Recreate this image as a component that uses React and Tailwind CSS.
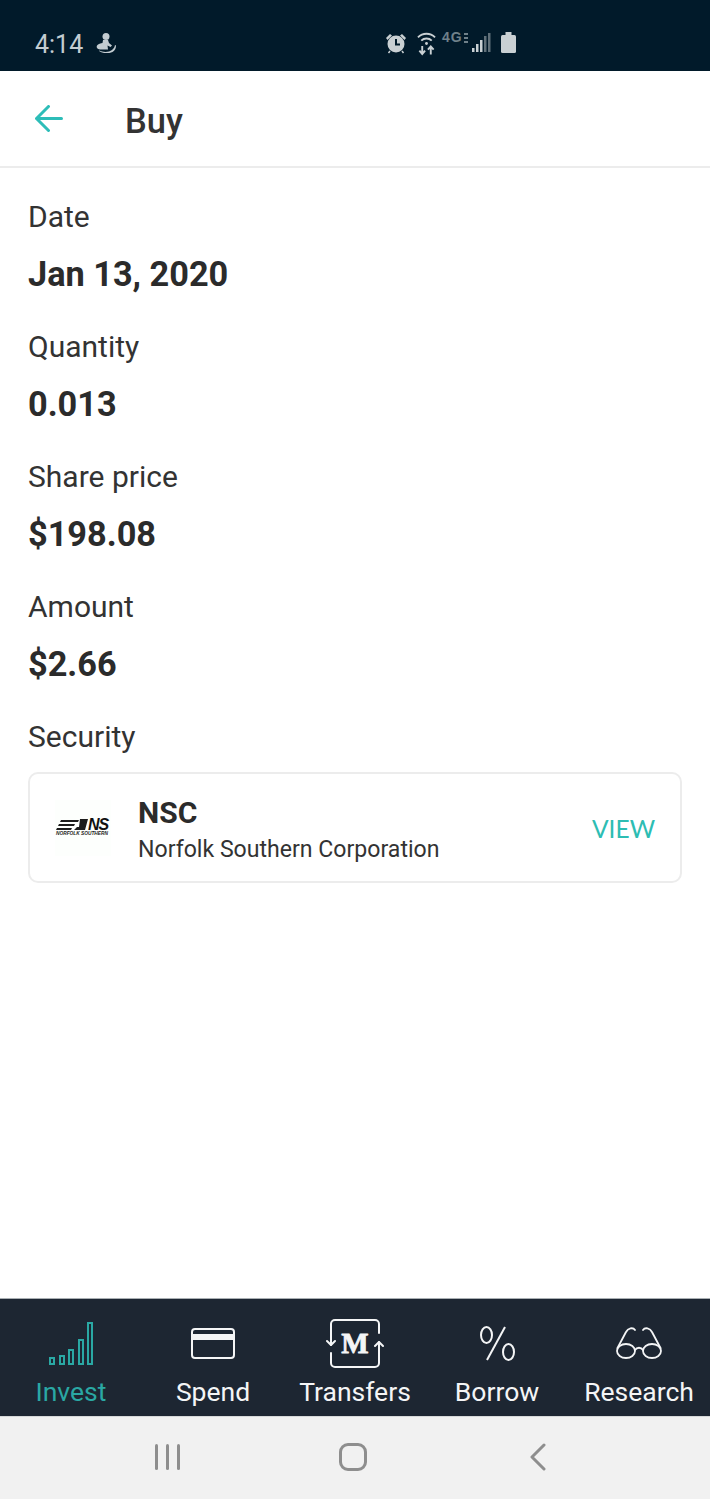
const fields = [
  { label: "Date", value: "Jan 13, 2020" },
  { label: "Quantity", value: "0.013" },
  { label: "Share price", value: "$198.08" },
  { label: "Amount", value: "$2.66" },
];

function StatusBar() {
  return (
    <div className="relative flex h-[71px] shrink-0 items-end bg-[#011a2a] pb-[11px] pl-[35px] text-[#c3ccd1]">
      <span className="text-[25px] leading-[30px]">4:14</span>
      {/* notification glyph */}
      <svg className="ml-[13px] mb-[7px]" width="20" height="20" viewBox="0 0 20 20" fill="#c3ccd1">
        <circle cx="10" cy="3.500" r="3.500" />
        <path d="M7 7h5l1 3 3 2.500-1.500 1.500-3-1.500.500 4H4C1 16 0 14 1 12.500 2 11 5 10 6.500 10z" />
        <path d="M3 17.500c4 2 10 2 13-.500 2-1.500 2.500-3 3-5l1 .500c0 3-1 5-3.500 6.500-4 2-10 1.500-13.500-1z" />
      </svg>
      {/* right side icons */}
      <div className="absolute left-[385px] top-[31px] flex items-start">
        <svg width="22" height="24" viewBox="0 0 22 24" fill="#c9d0d3">
          <circle cx="11" cy="13" r="8.500" />
          <path d="M1 7l4-4 2 1.500-4.500 4.500zM21 7l-4-4-2 1.500 4.500 4.500z" />
          <path d="M5 20l-1.500 2M17 20l1.500 2" stroke="#c9d0d3" strokeWidth="1.500" />
          <path d="M11 8v5.500h4" stroke="#011a2a" strokeWidth="2" fill="none" />
        </svg>
        <svg className="ml-[10px]" width="19" height="25" viewBox="0 0 20 25" fill="none" stroke="#c9d0d3">
          <path d="M1 6c5-5 13-5 18 0" strokeWidth="2" />
          <path d="M4.500 9.500c3-3 8-3 11 0" strokeWidth="2" />
          <circle cx="10" cy="12.500" r="1.500" fill="#c9d0d3" stroke="none" />
          <path d="M5.500 15v8M2.500 20l3 3.500 3-3.500M14.500 24v-8M11.500 19l3-3.500 3 3.500" strokeWidth="2" />
        </svg>
        <span className="ml-[6px] font-['Liberation_Sans',sans-serif] text-[14px] font-bold leading-[12px] tracking-[1px] text-[#6f8089]">4G</span>
        <div className="ml-[1px] mt-[2px] flex flex-col gap-[2px]">
          <span className="h-[2px] w-[4px] bg-[#6f8089]" />
          <span className="h-[2px] w-[4px] bg-[#6f8089]" />
          <span className="h-[2px] w-[4px] bg-[#6f8089]" />
        </div>
        <svg className="ml-[4px] mt-[2px]" width="19" height="20" viewBox="0 0 19 20">
          <rect x="0" y="15" width="2.500" height="4" fill="#c9d0d3" />
          <rect x="4" y="11" width="2.500" height="8" fill="#c9d0d3" />
          <rect x="8" y="7" width="2.500" height="12" fill="#c9d0d3" />
          <rect x="12" y="3" width="2.500" height="16" fill="#5f6f78" />
          <rect x="16" y="0" width="2.500" height="19" fill="#5f6f78" />
        </svg>
        <svg className="ml-[10px] mt-[1px]" width="15" height="21" viewBox="0 0 15 21" fill="#c9d0d3">
          <rect x="0" y="3" width="15" height="18" rx="1.500" />
          <rect x="4.500" y="0" width="6" height="3" />
        </svg>
      </div>
    </div>
  );
}

function Header() {
  return (
    <div className="flex h-[97px] shrink-0 items-center border-b-2 border-[#ececec] bg-white pl-[35px] pt-[4px]">
      <svg className="mb-[4px]" width="28" height="27" viewBox="0 0 28 27" fill="none" stroke="#2dbdb8" strokeWidth="3" strokeLinecap="round" strokeLinejoin="round">
        <path d="M1.500 13.500h25M13.500 1.500L1.500 13.500l12 12" />
      </svg>
      <span className="ml-[62px] text-[34.500px] font-medium leading-[36px] text-[#333333]">Buy</span>
    </div>
  );
}

function Field({ label, value }) {
  return (
    <div className="h-[130px]">
      <div className="text-[30px] leading-[32px] text-[#333333]">{label}</div>
      <div className="mt-[22px] text-[34.300px] font-bold leading-[38px] text-[#2b2b2b]">{value}</div>
    </div>
  );
}

function NsLogo() {
  return (
    <div className="flex h-[56px] w-[56px] shrink-0 flex-col items-center justify-center bg-[#fdfffd]">
      <div className="flex h-[13px] w-[56px] items-center">
        <svg width="33" height="13" viewBox="0 0 33 13" fill="#1c1c1c">
          <path d="M6 2h18l-1 2H5zM4 6h16l-1 2H3zM2 10h15l-1 2H1z" />
          <path d="M25 1h8l-3 11h-11l3-3h2z" />
        </svg>
        <span className="font-['Liberation_Sans',sans-serif] text-[16px] font-bold italic leading-[13px] tracking-[-1px] text-[#111111]">NS</span>
      </div>
      <div className="w-[54px] whitespace-nowrap font-['Liberation_Sans',sans-serif] text-[4.800px] font-bold italic leading-[6px] text-[#222222]">NORFOLK SOUTHERN</div>
    </div>
  );
}

function SecurityCard() {
  return (
    <div className="flex h-[111px] items-center rounded-[10px] border-2 border-[#ececec] bg-white pl-[25px] pr-[25px]">
      <NsLogo />
      <div className="ml-[27px] flex-1 pt-[4px]">
        <div className="text-[30px] font-bold leading-[36px] text-[#2b2b2b]">NSC</div>
        <div className="mt-[4px] text-[23.100px] leading-[30px] text-[#333333]">Norfolk Southern Corporation</div>
      </div>
      <span className="mt-[3px] font-['Lato',sans-serif] text-[24.500px] leading-[30px] text-[#2dbdb3]">VIEW</span>
    </div>
  );
}

function NavItem({ label, active, children }) {
  return (
    <div className="flex flex-1 flex-col items-center">
      <div className="flex h-[52px] items-end">{children}</div>
      <span className={`mt-[8px] whitespace-nowrap text-[26.500px] leading-[32px] ${active ? "text-[#2aa8a4]" : "text-[#f4f5f6]"}`}>{label}</span>
    </div>
  );
}

function BottomNav() {
  return (
    <div className="flex h-[118px] shrink-0 border-t border-[#a9afb3] bg-[#1d2632] pt-[17px]">
      <NavItem label="Invest" active>
        <svg className="mb-[2px]" width="45" height="44" viewBox="0 0 45 44" fill="none" stroke="#2aa8a4" strokeWidth="2">
          <rect x="1" y="36" width="4" height="6" />
          <rect x="11" y="34" width="4" height="8" />
          <rect x="20" y="28" width="4" height="14" />
          <rect x="30" y="18" width="4" height="24" />
          <rect x="39" y="1" width="4" height="41" />
        </svg>
      </NavItem>
      <NavItem label="Spend">
        <svg className="mb-[9px]" width="44" height="31" viewBox="0 0 44 31" fill="none">
          <rect x="1" y="1" width="42" height="29" rx="3" stroke="#f4f5f6" strokeWidth="2" />
          <rect x="1" y="6" width="42" height="6" fill="#f4f5f6" />
        </svg>
      </NavItem>
      <NavItem label="Transfers">
        <svg width="58" height="49" viewBox="0 0 58 49" fill="none" stroke="#f4f5f6" strokeWidth="2" strokeLinecap="round" strokeLinejoin="round">
          <path d="M5 26V5a4 4 0 0 1 4-4h40a4 4 0 0 1 4 4v9" />
          <path d="M5 34v10a4 4 0 0 0 4 4h40a4 4 0 0 0 4-4V23" />
          <path d="M1 22l4 4 4-4" />
          <path d="M49 27l4-4 4 4" />
          <text x="29" y="34" textAnchor="middle" fontFamily="Liberation Serif, serif" fontWeight="700" fontSize="29" fill="#f4f5f6" stroke="#f4f5f6" strokeWidth="0.800">M</text>
        </svg>
      </NavItem>
      <NavItem label="Borrow">
        <svg className="mb-[7px]" width="35" height="35" viewBox="0 0 35 35" fill="none" stroke="#f4f5f6" strokeWidth="2">
          <ellipse cx="6.500" cy="9" rx="5.500" ry="8" />
          <ellipse cx="28.500" cy="26" rx="5.500" ry="8" />
          <path d="M25 1L7 34" />
        </svg>
      </NavItem>
      <NavItem label="Research">
        <svg className="mb-[9px]" width="46" height="32" viewBox="0 0 46 32" fill="none" stroke="#f4f5f6" strokeWidth="1.800" strokeLinecap="round">
          <ellipse cx="10" cy="24" rx="9" ry="7" />
          <ellipse cx="36" cy="24" rx="9" ry="7" />
          <path d="M19 23c2-3 6-3 8 0" />
          <path d="M1.500 21L10 5c2-4 7-5 9-2" />
          <path d="M44.500 21L36 5c-2-4-7-5-9-2" />
        </svg>
      </NavItem>
    </div>
  );
}

function SoftKeys() {
  return (
    <div className="flex h-[83px] shrink-0 items-center border-t border-[#d6d8d9] bg-[#f1f1f1] pb-[2px]">
      <div className="ml-[155px] flex gap-[8px]">
        <span className="h-[26px] w-[3px] rounded-sm bg-[#8e8e8e]" />
        <span className="h-[26px] w-[3px] rounded-sm bg-[#8e8e8e]" />
        <span className="h-[26px] w-[3px] rounded-sm bg-[#8e8e8e]" />
      </div>
      <span className="ml-[159px] h-[28px] w-[28px] rounded-[9px] border-[3px] border-[#8e8e8e]" />
      <svg className="ml-[162px]" width="18" height="28" viewBox="0 0 18 28" fill="none" stroke="#8e8e8e" strokeWidth="3" strokeLinecap="round" strokeLinejoin="round">
        <path d="M15 2L3 14l12 12" />
      </svg>
    </div>
  );
}

export default function App() {
  return (
    <div className="flex h-[1499px] w-[710px] flex-col overflow-hidden bg-white font-['Roboto',sans-serif]">
      <StatusBar />
      <Header />
      <div className="flex-1 px-[28px] pt-[33px]">
        {fields.map((f) => (
          <Field key={f.label} label={f.label} value={f.value} />
        ))}
        <div className="text-[30px] leading-[32px] text-[#333333]">Security</div>
        <div className="mt-[19px]">
          <SecurityCard />
        </div>
      </div>
      <BottomNav />
      <SoftKeys />
    </div>
  );
}
